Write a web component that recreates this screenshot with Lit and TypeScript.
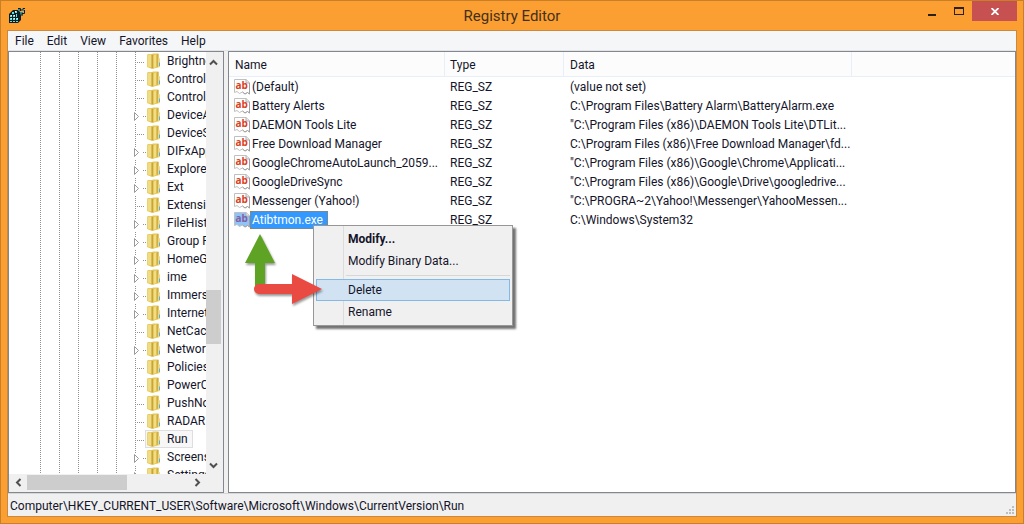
import { LitElement, html, css, svg } from "lit";
import { customElement } from "lit/decorators.js";
import { classMap } from "lit/directives/class-map.js";

interface Key { name: string; leaf?: boolean; current?: boolean }
interface Value { name: string; data: string; selected?: boolean }

const KEYS: Key[] = [
  { name: "Brightness", leaf: true },
  { name: "Control Panel", leaf: true },
  { name: "Controls Folder", leaf: true },
  { name: "DeviceAccess" },
  { name: "DeviceSetup", leaf: true },
  { name: "DIFxApp" },
  { name: "Explorer" },
  { name: "Ext" },
  { name: "Extensions", leaf: true },
  { name: "FileHistory" },
  { name: "Group Policy" },
  { name: "HomeGroup" },
  { name: "ime" },
  { name: "ImmersiveShell" },
  { name: "Internet Settings" },
  { name: "NetCache", leaf: true },
  { name: "Network" },
  { name: "Policies", leaf: true },
  { name: "PowerCPL", leaf: true },
  { name: "PushNotifications", leaf: true },
  { name: "RADAR", leaf: true },
  { name: "Run", leaf: true, current: true },
  { name: "Screensavers" },
  { name: "Settings" },
];

const VALUES: Value[] = [
  { name: "(Default)", data: "(value not set)" },
  { name: "Battery Alerts", data: "C:\\Program Files\\Battery Alarm\\BatteryAlarm.exe" },
  { name: "DAEMON Tools Lite", data: "\"C:\\Program Files (x86)\\DAEMON Tools Lite\\DTLit..." },
  { name: "Free Download Manager", data: "C:\\Program Files (x86)\\Free Download Manager\\fd..." },
  { name: "GoogleChromeAutoLaunch_2059...", data: "\"C:\\Program Files (x86)\\Google\\Chrome\\Applicati..." },
  { name: "GoogleDriveSync", data: "\"C:\\Program Files (x86)\\Google\\Drive\\googledrive..." },
  { name: "Messenger (Yahoo!)", data: "\"C:\\PROGRA~2\\Yahoo!\\Messenger\\YahooMessen..." },
  { name: "Atibtmon.exe", data: "C:\\Windows\\System32", selected: true },
];

const chevron = (d: string) => html`<svg width="9" height="9" viewBox="0 0 9 9" aria-hidden="true"><path d=${d} fill="none" stroke="#505050" stroke-width="2"/></svg>`;

const folder = html`<svg class="folder" width="14" height="16" viewBox="0 0 14 16" aria-hidden="true">
  <path d="M0 2 L1 1 H5 L6 0.500 H11 L12 1 V5 L13 6 V14 L7 15.500 L5 16 L0 14Z" fill="#e6c95c"/>
  <path d="M0.500 2 L4.500 1.500 V14.500 L0.500 13.500Z" fill="#f0dc84"/>
  <path d="M4.500 1.500 L6.500 2 V15.500 L4.500 15Z" fill="#c8a436"/>
  <path d="M6.500 2.500 L9.500 1.500 V13.500 L6.500 15Z" fill="#f2de80"/>
  <path d="M9.500 1.500 L11 1 V13.500 L9.500 14Z" fill="#cfae43"/>
  <path d="M11 5 L13 6 V13.500 L11 14Z" fill="#ebd78a"/>
  <path d="M12.500 9.500 V13" stroke="#5cb0cf"/>
</svg>`;

const stringIcon = html`<svg class="doc" width="16" height="16" viewBox="0 0 16 16" aria-hidden="true">
  <path class="sheet" d="M0.500 0.500 H12 L15.500 3.500 V15 L13.500 13.500 L11 15 L8.500 13 L5.500 14.500 L3 12.500 L0.500 13.500Z" stroke="#c0c0c0"/>
  <path d="M12 0.500 V4 H15.500" fill="#e8e8e8" stroke="#b0b0b0"/>
  <path d="M15.500 4 V15 L13.500 13.500 L11 15 L8.500 13" fill="none" stroke="#a0a0a0"/>
  <text x="1.500" y="10" font-family="Open Sans, sans-serif" font-size="10" font-weight="700">ab</text>
</svg>`;

@customElement("app-root")
export class AppRoot extends LitElement {
  static styles = css`
    :host { display: block; height: 100vh; min-height: 320px; font: 12px/18px Roboto, "Open Sans", sans-serif; color: #14142a; }
    * { box-sizing: border-box; }
    button { font: inherit; color: inherit; border: 0; margin: 0; padding: 0; background: none; }
    svg { display: block; flex: none; }
    .window { height: 100%; display: flex; flex-direction: column; background: #fc9f32; border: 1px solid #c87f27; padding: 0 6px 6px; }
    .title { flex: none; display: grid; grid-template-columns: 1fr auto 1fr; height: 29px; align-items: center; }
    .logo { margin-left: 2px; }
    h1 { margin: 0; font-size: 15px; line-height: 28px; font-weight: 400; color: #43301a; }
    .controls { display: flex; justify-content: flex-end; align-self: start; }
    .controls button { width: 27px; height: 20px; display: grid; place-items: center; }
    .controls .close { width: 45px; background: #c75050; }
    .client { flex: 1; min-height: 0; display: flex; flex-direction: column; border: 1px solid #c98a40; background: #f0f0f0; }
    .menubar { flex: none; display: flex; height: 20px; gap: 13px; padding-left: 7px; background: #f5f6f7; border-bottom: 1px solid #e4e4e6; }
    .menubar button { line-height: 20px; }
    .panes { flex: 1; min-height: 0; display: flex; gap: 4px; }
    .pane { border: 1px solid #828790; background: #fff; }
    .keys { flex: none; width: 216px; display: grid; grid-template: minmax(0, 1fr) 16px / minmax(0, 1fr) 15px; padding: 0 2px 2px 0; background: #f0f0f0; }
    .tree { list-style: none; margin: 0; padding: 0; overflow: hidden; background: #fff; display: grid; grid-template-columns: repeat(5, 19px) minmax(0, 1fr); padding-left: 31px; }
    .rail { background: repeating-linear-gradient(#909090 0 1px, transparent 1px 2px) left / 1px 100% no-repeat; }
    .branches { list-style: none; margin: 0; padding: 0; }
    .key { display: flex; height: 18px; align-items: center; white-space: nowrap; }
    .joint { flex: none; width: 10px; height: 18px; overflow: visible; }
    .label { display: flex; align-items: center; gap: 6px; height: 18px; line-height: 20px; padding: 0 4px 0 1px; border: 1px solid transparent; }
    .label.current { background: #f7f7f7; border-color: #dedede; }
    .vbar { display: flex; flex-direction: column; align-items: center; justify-content: space-between; padding: 6px 0 4px; }
    .vthumb { width: 15px; height: 54px; background: #cdcdcd; margin-top: 106px; }
    .hbar { display: flex; align-items: center; justify-content: space-between; padding: 0 4px 0 5px; }
    .hthumb { width: 100px; height: 15px; background: #cdcdcd; margin-right: 62px; }
    .scroll { display: grid; place-items: center; width: 9px; height: 9px; }
    .values { flex: 1; min-width: 0; position: relative; }
    table { width: 100%; table-layout: fixed; border-collapse: separate; border-spacing: 0; }
    .name { width: 216px; } .type { width: 119px; } .data { width: 288px; }
    th { height: 25px; padding: 2px 6px 0; text-align: left; font-weight: 400; background: #fcfcfc; border: solid #e5f0fa; border-width: 0 1px 1px 0; }
    th:last-child { border-right: 0; }
    td { height: 19px; padding: 0 6px; white-space: nowrap; overflow: hidden; }
    td:first-child { padding-left: 5px; }
    .kind { padding-left: 5px; }
    .value { display: flex; align-items: center; }
    .value span { height: 18px; line-height: 16px; padding: 0 4px 0 1px; border: 1px solid transparent; }
    .doc { fill: #d9411e; }
    .sheet { fill: #fff; }
    .selected .sheet { fill: #8ec4fa; }
    .selected .doc { fill: #8460a0; }
    .selected span { background: #3399ff; color: #fff; border-color: #b37b36; border-style: dotted; }
    .context { position: absolute; left: 84px; top: 173px; width: 200px; padding: 2px; border: 1px solid #979797; background: linear-gradient(90deg, transparent 29px, #dcdcdc 29px 30px, transparent 30px) #f0f0f0; box-shadow: 3px 3px 2px #0000008c; display: flex; flex-direction: column; }
    .context button { height: 22px; padding-left: 31px; text-align: left; border: 1px solid transparent; }
    .context .default { font-weight: 700; }
    .context .hot { background: #d1e2f2; border-color: #84b8e6; }
    hr { width: 164px; height: 1px; margin: 3px 0 3px auto; border: 0; background: #d7d7d7; }
    .arrows { position: absolute; left: 10px; top: 176px; filter: drop-shadow(1px 2px 1px #0006); pointer-events: none; }
    .status { flex: none; display: flex; justify-content: space-between; height: 23px; padding: 0 2px 2px; border-top: 1px solid #d7d7d7; }
    .status span { line-height: 24px; }
    .grip { align-self: flex-end; }
  `;

  private joint(leaf?: boolean) {
    return html`<svg class="joint" width="10" height="18" viewBox="0 0 10 18" aria-hidden="true">${
      leaf
        ? svg`<path d="M0.500 0 V18 M2 10.500 H10" fill="none" stroke="#909090" stroke-dasharray="1 1"/>`
        : svg`<path d="M0.500 0 V5 M8 10.500 H11" fill="none" stroke="#909090" stroke-dasharray="1 1"/><path d="M-0.500 6.500 L3.500 10.500 L-0.500 14.500Z" fill="#fff" stroke="#9a9a9a"/>`
    }</svg>`;
  }

  render() {
    return html`<div class="window">
      <header class="title">
        <svg class="logo" width="17" height="17" viewBox="0 0 17 17" aria-hidden="true">
          <path d="M0 7 L2 5 L4 3 H9 L11 5 L12 7 V13 L9 16 H0Z" fill="#101c20"/>
          <path d="M1 8h2v2H1z M4 8h2v2H4z M1 11h2v2H1z M4 11h2v2H4z M7 11h2v2H7z M1 14h2v1H1z M4 14h2v1H4z M7 14h2v1H7z M3 5h2v2H3z M6 4h2v2H6z M7 7h1v3H7z" fill="#58e6ea"/>
          <path d="M2 8h1v1H2z M5 8h1v1H5z M2 11h1v1H2z M5 11h1v1H5z M8 11h1v1H8z M6 4h1v1H6z" fill="#e8ffff"/>
          <path d="M9 2h2v2H9z M13 2h2v2h-2z M11 5h3v3h-3z" fill="#2b8d95"/>
          <path d="M9 1.500 H11.500 V4 L14 1.500 H16 M15.500 3 V6.500 H13 V9 M9.500 5 L11 7 V10" fill="none" stroke="#101c20"/>
        </svg>
        <h1>Registry Editor</h1>
        <div class="controls">
          <button aria-label="Minimize"><svg width="8" height="10" viewBox="0 0 8 10"><path d="M0 8h8v2H0z" fill="#2b2118"/></svg></button>
          <button aria-label="Maximize"><svg width="10" height="8" viewBox="0 0 10 8"><path d="M0 0h10v8H0z M1 2v5h8V2z" fill="#2b2118" fill-rule="evenodd"/></svg></button>
          <button class="close" aria-label="Close"><svg width="8" height="7" viewBox="0 0 8 7"><path d="M0.500 0 L7.500 7 M7.500 0 L0.500 7" stroke="#fff" stroke-width="1.800"/></svg></button>
        </div>
      </header>
      <div class="client">
        <nav class="menubar">${["File", "Edit", "View", "Favorites", "Help"].map(m => html`<button>${m}</button>`)}</nav>
        <main class="panes">
          <section class="pane keys" aria-label="Keys">
            <div class="tree">
              ${[0, 1, 2, 3, 4].map(() => html`<div class="rail"></div>`)}
              <ul class="branches">${KEYS.map(k => html`<li class="key">${this.joint(k.leaf)}<span class=${classMap({ label: true, current: !!k.current })}>${folder}${k.name}</span></li>`)}</ul>
            </div>
            <div class="vbar">
              <button class="scroll" aria-label="Scroll up">${chevron("M1 6.500 L4.500 3 L8 6.500")}</button>
              <div class="vthumb"></div>
              <button class="scroll" aria-label="Scroll down">${chevron("M1 2.500 L4.500 6 L8 2.500")}</button>
            </div>
            <div class="hbar">
              <button class="scroll" aria-label="Scroll left">${chevron("M6.500 1 L3 4.500 L6.500 8")}</button>
              <div class="hthumb"></div>
              <button class="scroll" aria-label="Scroll right">${chevron("M2.500 1 L6 4.500 L2.500 8")}</button>
            </div>
          </section>
          <section class="pane values" aria-label="Values">
            <table>
              <colgroup><col class="name"><col class="type"><col class="data"><col></colgroup>
              <thead><tr><th>Name</th><th class="kind">Type</th><th>Data</th><th></th></tr></thead>
              <tbody>${VALUES.map(v => html`<tr class=${classMap({ selected: !!v.selected })}>
                <td><div class="value">${stringIcon}<span>${v.name}</span></div></td><td class="kind">REG_SZ</td><td>${v.data}</td><td></td></tr>`)}</tbody>
            </table>
            <div class="context">
              <button class="default">Modify...</button>
              <button>Modify Binary Data...</button>
              <hr>
              <button class="hot">Delete</button>
              <button>Rename</button>
            </div>
            <svg class="arrows" width="90" height="84" viewBox="0 0 90 84" aria-hidden="true">
              <path d="M21 6 L36 35 H26 V60 H16 V35 H6Z" fill="#5ea324"/>
              <path d="M20 56 H53 V46 L83 61 L53 76 V66 H20 A5 5 0 0 1 20 56Z" fill="#e94b43"/>
            </svg>
          </section>
        </main>
        <footer class="status"><span>Computer\\HKEY_CURRENT_USER\\Software\\Microsoft\\Windows\\CurrentVersion\\Run</span>
          <svg class="grip" width="8" height="8" viewBox="0 0 8 8" aria-hidden="true"><path d="M6 0h2v2H6z M3 3h2v2H3z M6 3h2v2H6z M0 6h2v2H0z M3 6h2v2H3z M6 6h2v2H6z" fill="#bdbdbd"/></svg>
        </footer>
      </div>
    </div>`;
  }
}
